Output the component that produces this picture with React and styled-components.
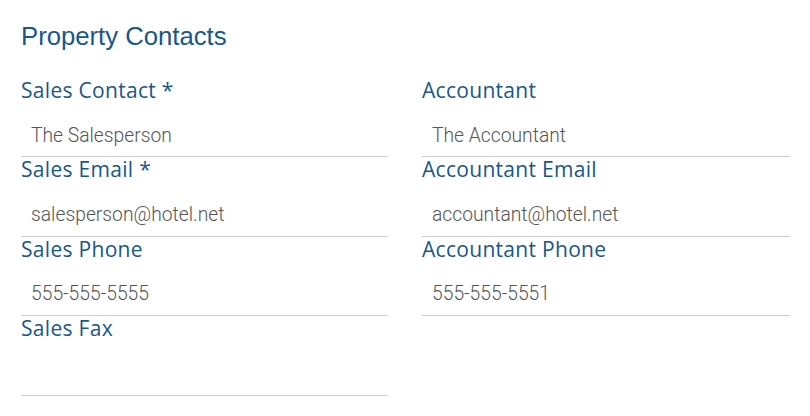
import React from "react";
import styled, { createGlobalStyle } from "styled-components";

const Global = createGlobalStyle`
  html, body { margin: 0; padding: 0; background: #fff; }
  body { width: 810px; height: 416px; overflow: hidden; }
`;

const Page = styled.div`
  padding: 19px 20px 0 21px;
`;

const Title = styled.h2`
  margin: 0 0 25px 0;
  font-family: "Liberation Sans", Arial, sans-serif;
  font-weight: 400;
  font-size: 25.7px;
  line-height: 34px;
  color: #17578a;
`;

const Grid = styled.div`
  display: grid;
  grid-template-columns: 367px 368px;
  column-gap: 34px;
  align-items: start;
`;

const Column = styled.div`
  display: flex;
  flex-direction: column;
`;

const Field = styled.div`
  display: flex;
  flex-direction: column;
  height: 79.4px;
`;

const Label = styled.label`
  font-family: "Open Sans", "Noto Sans", sans-serif;
  font-size: 21px;
  line-height: 24px;
  color: #17578a;
  letter-spacing: 0.3px;
`;

const Value = styled.div`
  flex: 1;
  display: flex;
  align-items: center;
  padding: 12px 0 0 10px;
  font-family: Roboto, "Liberation Sans", sans-serif;
  font-weight: 300;
  font-size: 19.3px;
  color: #555;
  border-bottom: 1px solid #cfcfcf;
`;

const left = [
  ["Sales Contact *", "The Salesperson"],
  ["Sales Email *", "salesperson@hotel.net"],
  ["Sales Phone", "555-555-5555"],
  ["Sales Fax", ""],
];
const right = [
  ["Accountant", "The Accountant"],
  ["Accountant Email", "accountant@hotel.net"],
  ["Accountant Phone", "555-555-5551"],
];

const renderFields = (list) =>
  list.map(([label, value]) => (
    <Field key={label}>
      <Label>{label}</Label>
      <Value>{value}</Value>
    </Field>
  ));

export default function App() {
  return (
    <>
      <Global />
      <Page>
        <Title>Property Contacts</Title>
        <Grid>
          <Column>{renderFields(left)}</Column>
          <Column>{renderFields(right)}</Column>
        </Grid>
      </Page>
    </>
  );
}
